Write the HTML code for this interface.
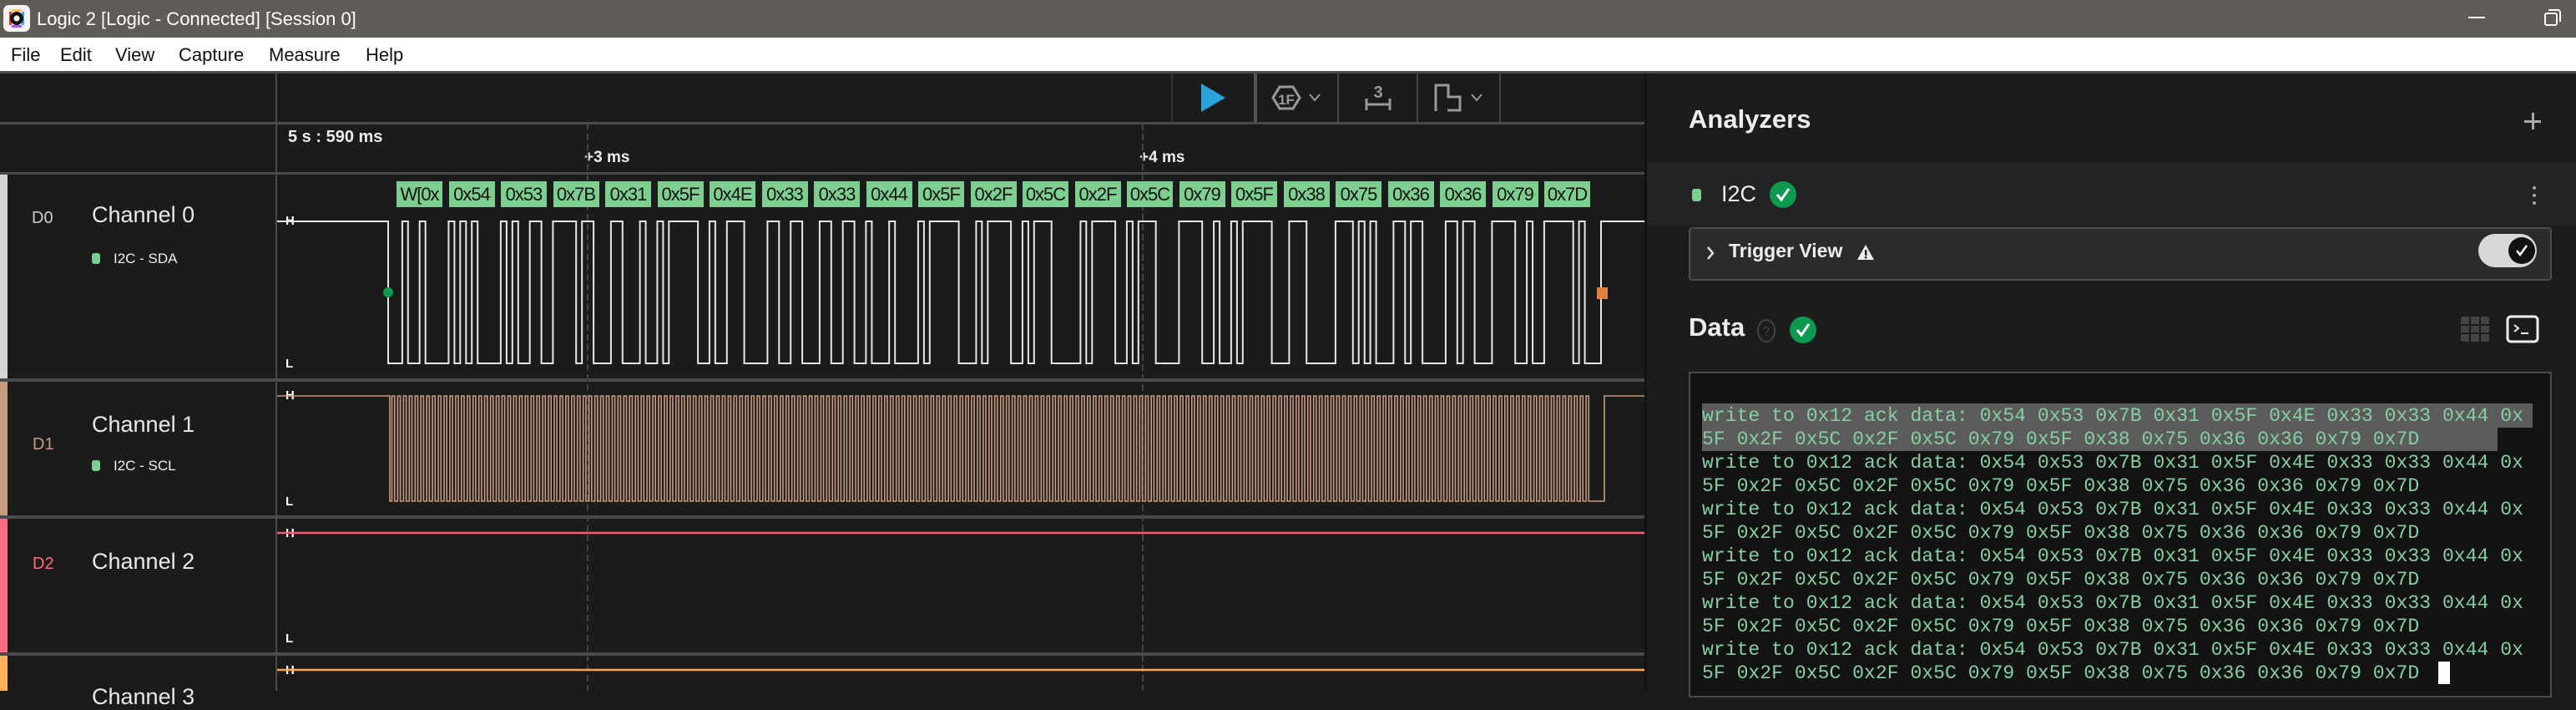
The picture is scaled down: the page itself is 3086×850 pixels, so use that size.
<!DOCTYPE html>
<html><head><meta charset="utf-8">
<style>
*{margin:0;padding:0;box-sizing:border-box}
body{width:3086px;height:827px;overflow:hidden;background:#1b1b1b;font-family:"Liberation Sans",sans-serif;position:relative}
.a{position:absolute}
#title{left:0;top:0;width:3086px;height:45px;background:#5f5b57;color:#fff;font-size:22px}
#menu{left:0;top:45px;width:3086px;height:40px;background:#fff;font-size:22px;color:#111}
#menu span{position:absolute;top:8px}
.sep{background:#4a4a4e}
.lbl{color:#e8e8e8;font-size:27px}
.dn{font-size:20px}
.sub{color:#eee;font-size:17px}
.dot{width:10px;height:13px;border-radius:3px;background:#7ccf8f}
.hl{color:#fff;font-size:15px;font-weight:bold}
.box{background:#7ccf8f;color:#111;font-size:22px;height:31px;top:217px;width:55px;text-align:center;line-height:31px;overflow:hidden;letter-spacing:-1px}
#term{left:2023px;top:445px;width:1034px;height:390px;background:#131313;border:2px solid #4a4a4e}
.tl{position:absolute;left:14px;font-family:"Liberation Mono",monospace;font-size:23.1px;color:#86cfa2;white-space:pre;line-height:28px}
</style></head><body>
<div id="title" class="a">
 <svg class="a" style="left:3px;top:5px" width="34" height="34" viewBox="0 0 34 34"><rect x="1" y="1" width="32" height="32" rx="7" fill="#f4f4f4"/><rect x="8" y="9" width="3" height="16" fill="#f33"/><rect x="23" y="9" width="3" height="16" fill="#3af"/><rect x="11" y="6" width="12" height="3" fill="#fc3"/><rect x="11" y="25" width="12" height="3" fill="#a5f"/><circle cx="17" cy="17" r="8" fill="#111"/><circle cx="17" cy="17" r="3.5" fill="#fff"/></svg>
 <span class="a" style="left:44px;top:10px">Logic 2 [Logic - Connected] [Session 0]</span>
 <div class="a" style="left:2957px;top:20px;width:20px;height:2px;background:#fff"></div>
 <div class="a" style="left:3048px;top:15px;width:16px;height:16px;border:2px solid #fff;border-radius:3px"></div>
 <div class="a" style="left:3053px;top:11px;width:15px;height:15px;border-top:2px solid #fff;border-right:2px solid #fff;border-radius:0 4px 0 0"></div>
</div>
<div id="menu" class="a"><span style="left:13px">File</span><span style="left:72px">Edit</span><span style="left:138px">View</span><span style="left:214px">Capture</span><span style="left:322px">Measure</span><span style="left:438px">Help</span></div>
<div class="a sep" style="left:0;top:85px;width:3086px;height:3px"></div>

<div class="a sep" style="left:0;top:146px;width:1973px;height:3px"></div>
<div class="a sep" style="left:330px;top:88px;width:2px;height:739px"></div>
<div class="a" style="left:1403px;top:88px;width:2px;height:58px;background:#333"></div>
<div class="a" style="left:1502px;top:88px;width:4px;height:58px;background:#555"></div>
<div class="a" style="left:1602px;top:88px;width:2px;height:58px;background:#444"></div>
<div class="a" style="left:1697px;top:88px;width:2px;height:58px;background:#444"></div>
<div class="a" style="left:1796px;top:88px;width:2px;height:58px;background:#444"></div>
<svg class="a" style="left:1430px;top:95px" width="360" height="45" viewBox="1430 95 360 45">
 <polygon points="1439,100 1468,117 1439,134" fill="#29a3dc"/>
 <polygon points="1533,104 1549,104 1557,117 1549,130 1533,130 1525,117" fill="none" stroke="#999" stroke-width="3"/>
 <text x="1541" y="125" fill="#999" font-size="17" font-weight="bold" text-anchor="middle" font-family="Liberation Sans">1F</text>
 <polyline points="1569,113 1575,120 1581,113" fill="none" stroke="#999" stroke-width="2"/>
 <text x="1651" y="117" fill="#999" font-size="20" font-weight="bold" text-anchor="middle" font-family="Liberation Sans">3</text>
 <path d="M1637 118v14M1665 118v14M1637 125h28" stroke="#999" stroke-width="3" fill="none"/>
 <path d="M1720 133V102h15v14h14v16h-15" stroke="#999" stroke-width="3" fill="none"/>
 <polyline points="1763,113 1769,120 1775,113" fill="none" stroke="#999" stroke-width="2"/>
</svg>

<div class="a" style="left:345px;top:153px;color:#eee;font-size:20px;font-weight:bold">5 s : 590 ms</div>
<div class="a" style="left:700px;top:178px;color:#eee;font-size:19px;font-weight:bold">+3 ms</div>
<div class="a" style="left:1365px;top:178px;color:#eee;font-size:19px;font-weight:bold">+4 ms</div>
<div class="a sep" style="left:0;top:206px;width:1973px;height:3px"></div>

<div class="a" style="left:0;top:209px;width:9px;height:245px;background:#d4d4d4"></div>
<div class="a dn" style="left:38px;top:250px;color:#ccc">D0</div>
<div class="a lbl" style="left:110px;top:242px">Channel 0</div>
<div class="a dot" style="left:110px;top:303px"></div>
<div class="a sub" style="left:136px;top:300px">I2C - SDA</div>
<div class="a sep" style="left:0;top:453px;width:1973px;height:4px"></div>
<div class="a" style="left:0;top:457px;width:9px;height:161px;background:#c89a7e"></div>
<div class="a dn" style="left:39px;top:521px;color:#c89a7e">D1</div>
<div class="a lbl" style="left:110px;top:493px">Channel 1</div>
<div class="a dot" style="left:110px;top:551px"></div>
<div class="a sub" style="left:136px;top:548px">I2C - SCL</div>
<div class="a sep" style="left:0;top:617px;width:1973px;height:4px"></div>
<div class="a" style="left:0;top:621px;width:9px;height:161px;background:#ff6b80"></div>
<div class="a dn" style="left:39px;top:664px;color:#ff6b80">D2</div>
<div class="a lbl" style="left:110px;top:657px">Channel 2</div>
<div class="a sep" style="left:0;top:781px;width:1973px;height:4px"></div>
<div class="a" style="left:0;top:785px;width:9px;height:42px;background:#ffb357"></div>
<div class="a lbl" style="left:110px;top:819px">Channel 3</div>

<div class="a hl" style="left:342px;top:256px">H</div><div class="a hl" style="left:342px;top:427px">L</div>
<div class="a hl" style="left:342px;top:465px">H</div><div class="a hl" style="left:342px;top:592px">L</div>
<div class="a hl" style="left:342px;top:630px">H</div><div class="a hl" style="left:342px;top:756px">L</div>
<div class="a hl" style="left:342px;top:794px">H</div>

<svg id="wf" class="a" style="left:0;top:0" width="1973" height="827"></svg>
<div id="boxes"></div>

<div class="a" style="left:1970px;top:88px;width:3px;height:739px;background:#111"></div>
<div class="a" style="left:1973px;top:88px;width:1113px;height:739px;background:#1c1c1c"></div>
<div class="a" style="left:2023px;top:125px;color:#eee;font-size:31px;font-weight:bold">Analyzers</div>
<div class="a" style="left:3024px;top:144px;width:20px;height:3px;background:#aaa"></div>
<div class="a" style="left:3033px;top:135px;width:3px;height:20px;background:#aaa"></div>
<div class="a" style="left:1973px;top:195px;width:1113px;height:75px;background:#232325"></div>
<div class="a dot" style="left:2027px;top:226px;width:11px;height:15px"></div>
<div class="a" style="left:2062px;top:217px;color:#eee;font-size:27px">I2C</div>
<svg class="a" style="left:2119px;top:216px" width="34" height="34"><circle cx="17" cy="17" r="16" fill="#0e9a4e"/><polyline points="10,17 15,23 24,10" fill="none" stroke="#fff" stroke-width="3"/></svg>
<div class="a" style="left:3034px;top:223px;width:4px;height:4px;background:#aaa;border-radius:2px;box-shadow:0 9px #aaa,0 18px #aaa"></div>
<div class="a" style="left:2023px;top:272px;width:1034px;height:64px;background:#2b2b2e;border:2px solid #4b4b50;border-radius:4px"></div>
<svg class="a" style="left:2040px;top:290px" width="20" height="26"><polyline points="6,6 12,13 6,20" fill="none" stroke="#ddd" stroke-width="2.5"/></svg>
<div class="a" style="left:2071px;top:287px;color:#eee;font-size:23px;font-weight:bold">Trigger View</div>
<svg class="a" style="left:2224px;top:291px" width="22" height="22"><polygon points="11,2 21,20 1,20" fill="#eee"/><rect x="10" y="8" width="2.5" height="7" fill="#222"/><rect x="10" y="16" width="2.5" height="2.5" fill="#222"/></svg>
<div class="a" style="left:2969px;top:280px;width:70px;height:40px;background:#d8d8d8;border-radius:20px"></div>
<svg class="a" style="left:3004px;top:283px" width="34" height="34"><circle cx="17" cy="17" r="16" fill="#111"/><polyline points="11,17 15,22 23,11" fill="none" stroke="#fff" stroke-width="2.5"/></svg>
<div class="a" style="left:2023px;top:374px;color:#eee;font-size:31px;font-weight:bold">Data</div>
<svg class="a" style="left:2104px;top:381px" width="24" height="30"><ellipse cx="12" cy="15" rx="10" ry="13" fill="none" stroke="#444" stroke-width="2"/><text x="12" y="21" font-size="16" fill="#444" text-anchor="middle" font-family="Liberation Sans">?</text></svg>
<svg class="a" style="left:2143px;top:378px" width="34" height="34"><circle cx="17" cy="17" r="16" fill="#0e9a4e"/><polyline points="10,17 15,23 24,10" fill="none" stroke="#fff" stroke-width="3"/></svg>
<svg class="a" style="left:2946px;top:377px" width="38" height="34"><rect x="2" y="2" width="34" height="30" rx="3" fill="#444"/><path d="M2 12h34M2 22h34M13 2v30M25 2v30" stroke="#1c1c1c" stroke-width="2"/></svg>
<svg class="a" style="left:3002px;top:377px" width="40" height="34"><rect x="2" y="2" width="36" height="30" rx="4" fill="none" stroke="#eee" stroke-width="3"/><polyline points="10,12 15,16 10,20" fill="none" stroke="#eee" stroke-width="2"/><path d="M18 22h9" stroke="#eee" stroke-width="2"/></svg>

<div id="term" class="a">
 <div class="a" style="left:14px;top:36px;width:995px;height:29px;background:#5c5c5c"></div>
 <div class="a" style="left:14px;top:65px;width:953px;height:28px;background:#5c5c5c"></div>
 <div id="lines"></div>
 <div class="a" style="left:896px;top:345px;width:14px;height:27px;background:#fff"></div>
</div>

<script>
var bytes=[0x24,0x54,0x53,0x7B,0x31,0x5F,0x4E,0x33,0x33,0x44,0x5F,0x2F,0x5C,0x2F,0x5C,0x79,0x5F,0x38,0x75,0x36,0x36,0x79,0x7D];
var N=bytes.length;
var names=["W[0x"];for(var i=1;i<N;i++)names.push("0x"+bytes[i].toString(16).toUpperCase());
var bh="";var pitch=62.5;
for(var i=0;i<N;i++){bh+='<div class="a box" style="left:'+(475+i*pitch).toFixed(1)+'px">'+names[i]+'</div>';}
document.getElementById("boxes").innerHTML=bh;
var H=265,L=435,bw=pitch/9;
var d="M332 "+H+" H465 V"+L;var cur=L;
for(var i=0;i<N;i++){var b=bytes[i];var x0=468+i*pitch;
 for(var k=0;k<9;k++){var v=k<8?((b>>(7-k))&1):0;var y=v?H:L;var x=x0+k*bw;
  if(y!=cur){d+=" H"+x.toFixed(1)+" V"+y;cur=y;}}}
if(cur!=L)d+=" H1912 V"+L;
d+=" H1918 V"+H+" H1970";
var sh=474,sl=600;var c="M332 "+sh+" H467 V"+sl;
for(var i=0;i<N;i++){var x0=468+i*pitch;for(var k=0;k<9;k++){var x=x0+k*bw+1.5;c+=" H"+x.toFixed(1)+" V"+sh+" H"+(x+3.2).toFixed(1)+" V"+sl;}}
c+=" H1922 V"+sh+" H1970";
var s='<path d="M704 148V827M1369 148V827" stroke="#444" stroke-width="2" stroke-dasharray="8 4"/>';
s+='<path d="'+d+'" fill="none" stroke="#e6e6e6" stroke-width="2"/>';
s+='<path d="'+c+'" fill="none" stroke="#c89a7e" stroke-width="1.6"/>';
s+='<path d="M332 638H1970" stroke="#ff5a72" stroke-width="2.5"/><path d="M332 802H1970" stroke="#ffa748" stroke-width="2.5"/>';
s+='<circle cx="465" cy="350" r="6" fill="#0e9a4e"/><rect x="1913" y="344" width="13" height="14" fill="#e0803a"/>';
document.getElementById("wf").innerHTML=s;
var l1="write to 0x12 ack data: 0x54 0x53 0x7B 0x31 0x5F 0x4E 0x33 0x33 0x44 0x",l2="5F 0x2F 0x5C 0x2F 0x5C 0x79 0x5F 0x38 0x75 0x36 0x36 0x79 0x7D";
var t="";for(var i=0;i<6;i++){t+='<div class="tl" style="top:'+(37+i*56)+'px">'+l1+'</div><div class="tl" style="top:'+(65+i*56)+'px">'+l2+'</div>';}
document.getElementById("lines").innerHTML=t;
</script>
</body></html>
